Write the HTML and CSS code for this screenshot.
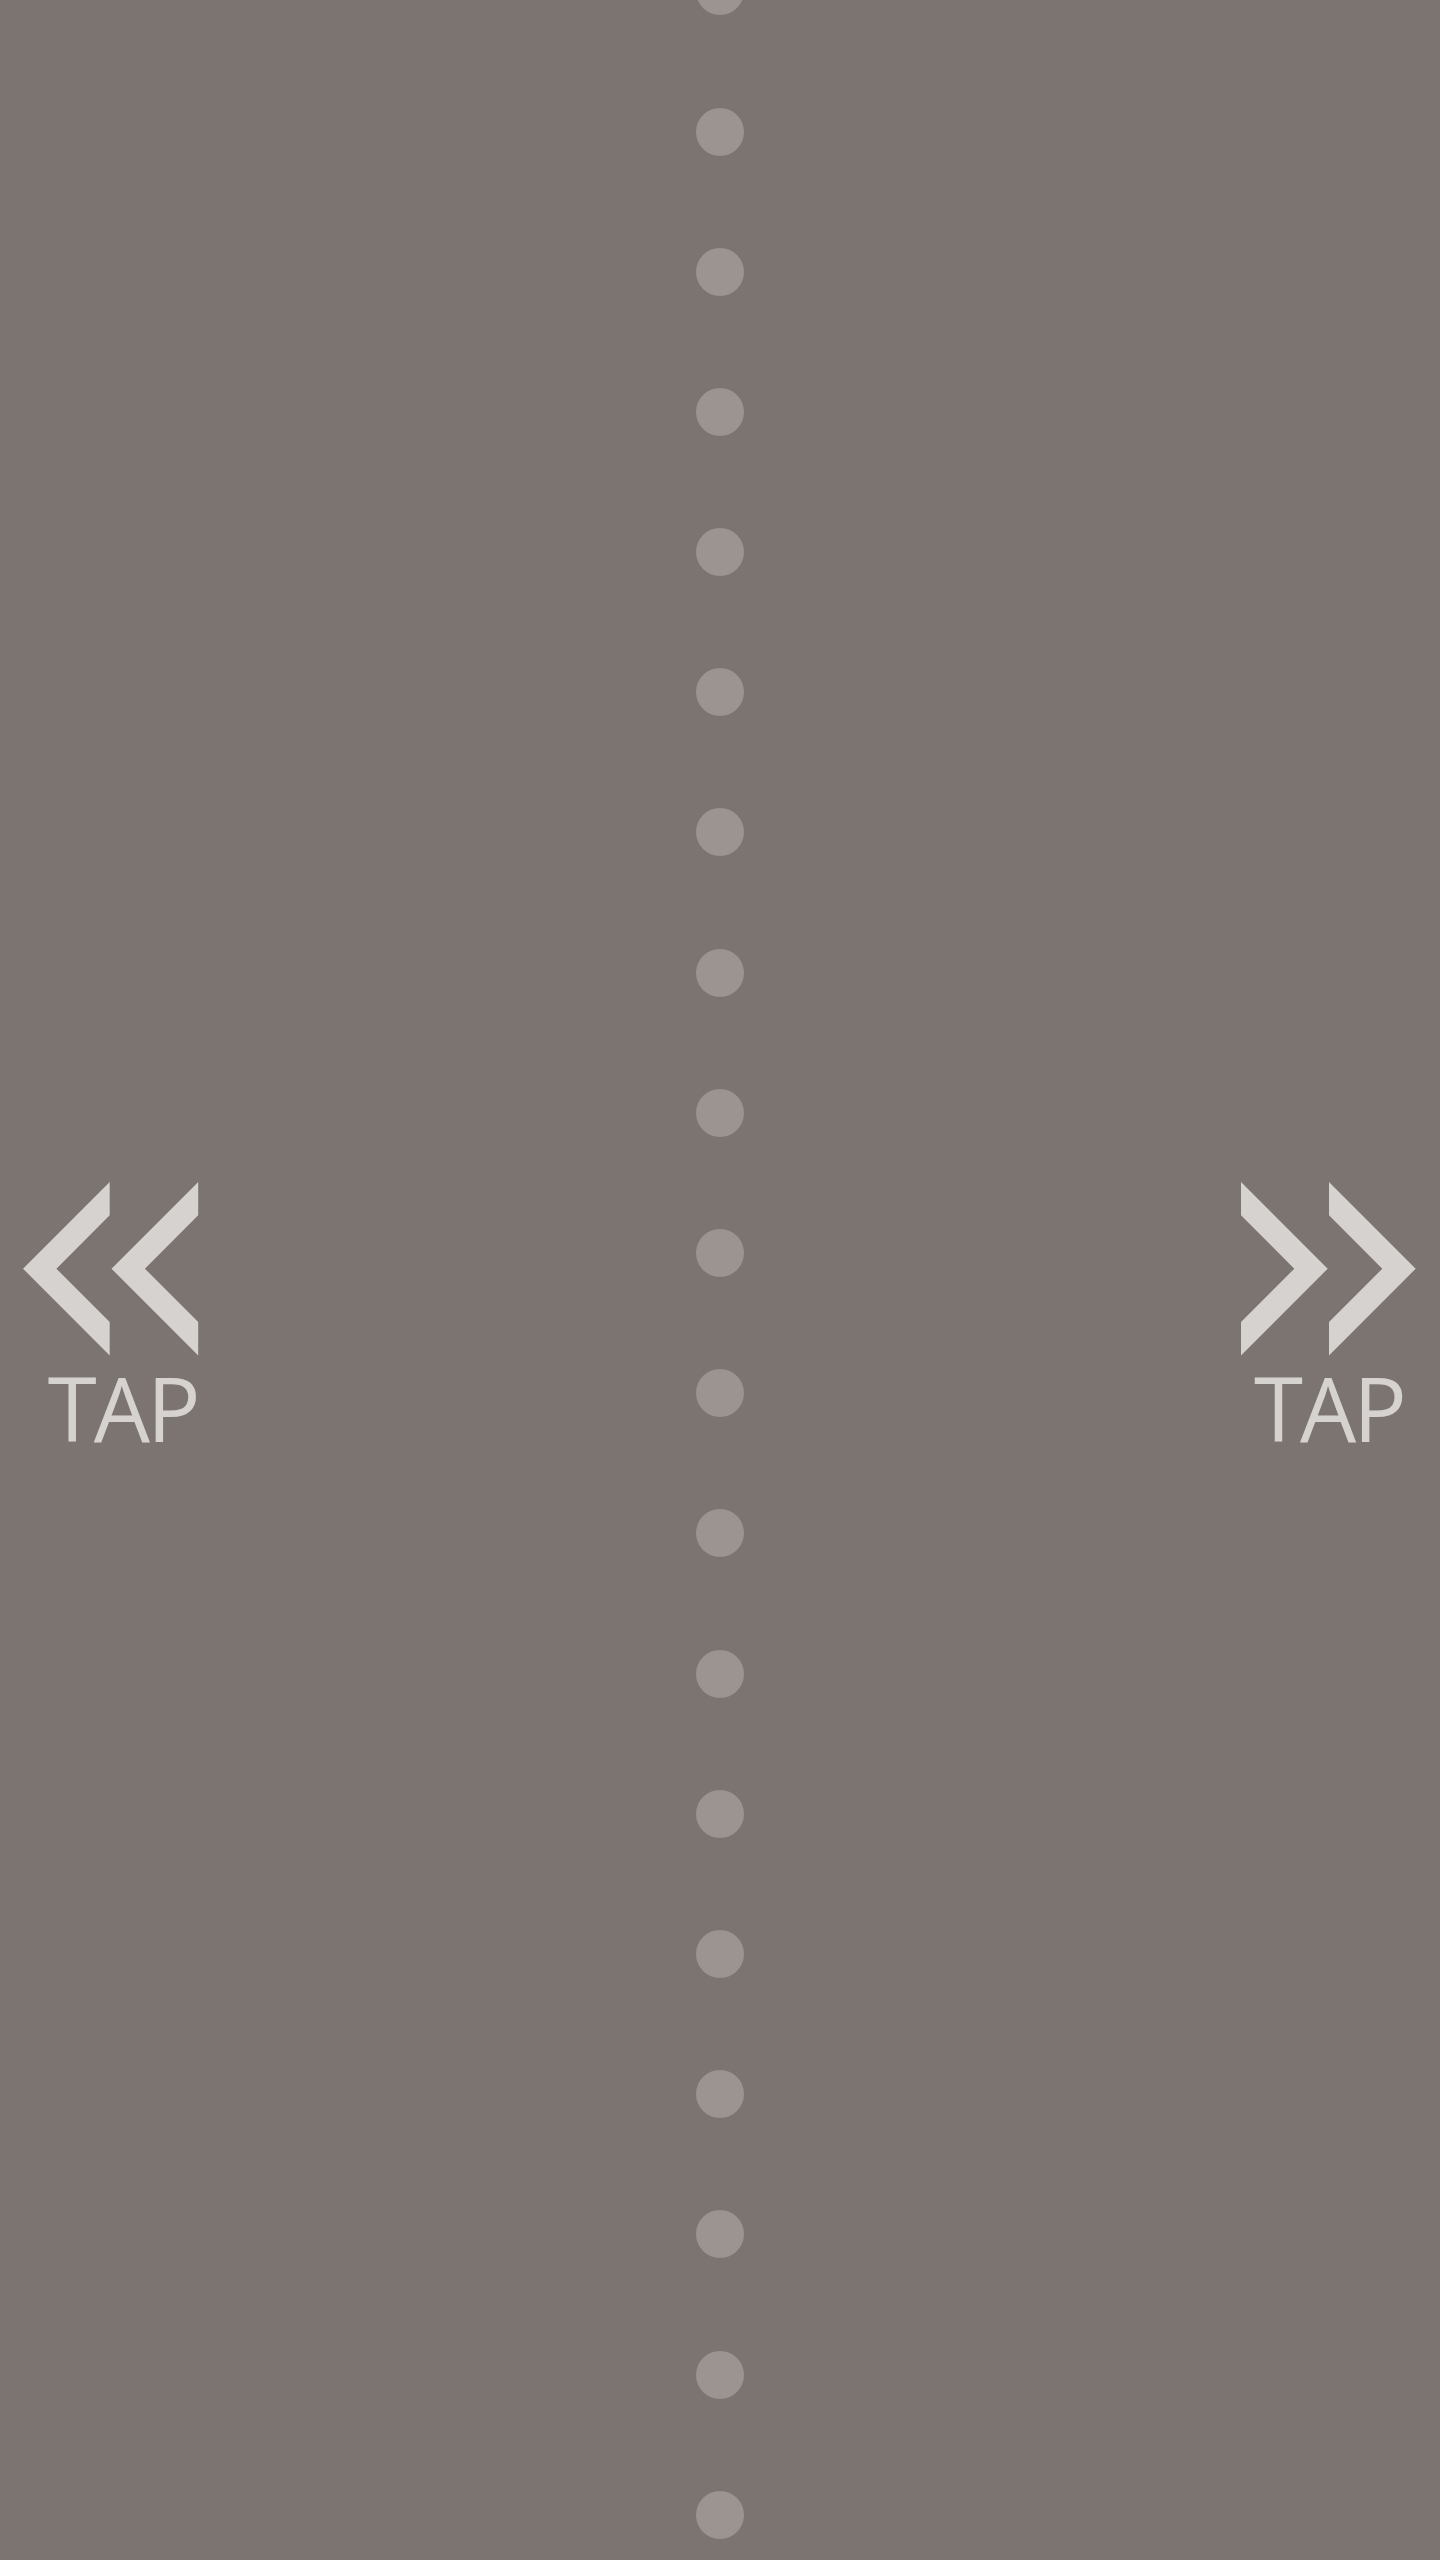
FILE: index.html
```html
<!DOCTYPE html>
<html lang="en">
<head>
<meta charset="utf-8">
<title>Tap</title>
<link rel="stylesheet" href="styles.css">
</head>
<body>
<main class="stage">
  <div class="dots">
    <span class="dot"></span><span class="dot"></span><span class="dot"></span><span class="dot"></span>
    <span class="dot"></span><span class="dot"></span><span class="dot"></span><span class="dot"></span>
    <span class="dot"></span><span class="dot"></span><span class="dot"></span><span class="dot"></span>
    <span class="dot"></span><span class="dot"></span><span class="dot"></span><span class="dot"></span>
    <span class="dot"></span><span class="dot"></span><span class="dot"></span>
  </div>

  <button class="tap tap-left" type="button">
    <svg class="chev" width="176" height="174" viewBox="0 0 176 174" aria-hidden="true">
      <polygon points="0,86.7 86.7,0 86.7,33.3 33.4,86.7 86.7,140 86.7,173.4"/>
      <polygon points="88.5,86.7 175.2,0 175.2,33.3 121.9,86.7 175.2,140 175.2,173.4"/>
    </svg>
    <span class="tap-label">TAP</span>
  </button>

  <button class="tap tap-right" type="button">
    <svg class="chev" width="176" height="174" viewBox="0 0 176 174" aria-hidden="true">
      <polygon points="0,0 86.7,86.7 0,173.4 0,140 53.3,86.7 0,33.3"/>
      <polygon points="88,0 174.7,86.7 88,173.4 88,140 141.3,86.7 88,33.3"/>
    </svg>
    <span class="tap-label">TAP</span>
  </button>
</main>
</body>
</html>
```
FILE: styles.css
```css
html, body {
  margin: 0;
  padding: 0;
}
body {
  background: #7b7470;
  font-family: "Open Sans", "Liberation Sans", sans-serif;
  overflow: hidden;
}
.stage {
  position: relative;
  width: 1440px;
  height: 2560px;
  overflow: hidden;
}
.dots {
  display: flex;
  flex-direction: column;
  align-items: center;
  gap: 92.2px;
  margin-top: -32.7px;
}
.dot {
  display: block;
  width: 48px;
  height: 48px;
  border-radius: 50%;
  background: #9b9490;
  flex: none;
}
.tap {
  position: absolute;
  top: 1182.3px;
  display: flex;
  flex-direction: column;
  padding: 0;
  margin: 0;
  border: 0;
  background: none;
  color: #d6d2cf;
  cursor: pointer;
}
.chev {
  display: block;
  fill: #d6d2cf;
}
.tap-left {
  left: 22.7px;
  align-items: flex-start;
}
.tap-right {
  left: 1241px;
  align-items: flex-start;
}
.tap-label {
  font-family: "Open Sans", "Liberation Sans", sans-serif;
  font-size: 89px;
  font-weight: 400;
  line-height: 1;
  margin-top: 7px;
  letter-spacing: -3px;
}
.tap-left .tap-label {
  margin-left: 25px;
}
.tap-right .tap-label {
  margin-left: 13px;
}
```
